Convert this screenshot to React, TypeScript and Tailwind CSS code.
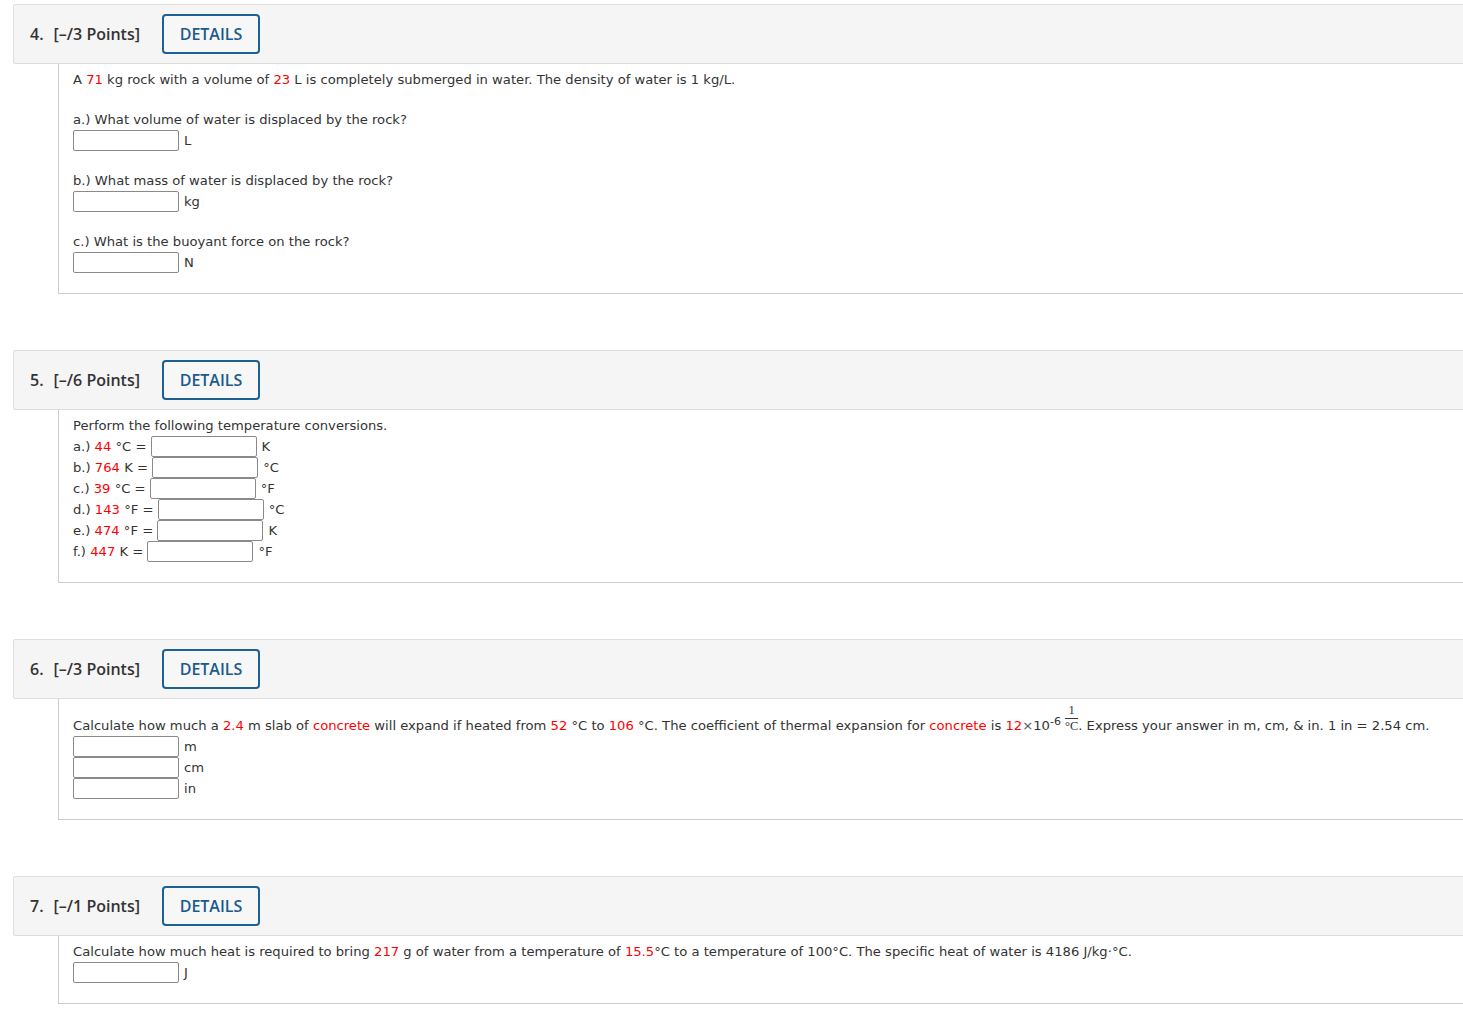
import type { ReactNode } from "react";

const body = "font-['DejaVu_Sans','Verdana',sans-serif] text-[13.15px] leading-[20px] text-[#333]";

function R({ children }: { children: ReactNode }) {
  return <span className="text-[#ff0000]">{children}</span>;
}

function Box() {
  return <span className="inline-block align-middle w-[106px] h-[21px] border border-[#8a8a8a] rounded-[2px] bg-white" />;
}

function InputRow({ unit }: { unit: string }) {
  return (
    <div className="flex items-center h-[21px]">
      <Box />
      <span className="ml-[5px]">{unit}</span>
    </div>
  );
}

function Question({ num, points, children }: { num: number; points: number; children: ReactNode }) {
  return (
    <section className="mb-[56px]">
      <div className="flex items-center h-[60px] bg-[#f5f5f5] border border-[#dddddd] rounded-l-[2px] pl-[16px] font-['Open_Sans',sans-serif] text-[#333]">
        <span className="text-[16px] font-semibold">{num}.</span>
        <span className="ml-[10px] text-[16px] font-semibold">[–/{points} Points]</span>
        <span className="ml-[22px] flex items-center justify-center w-[98px] h-[40px] border-2 border-[#1b6196] rounded-[4px] text-[16px] font-semibold text-[#1b5a8c] bg-[#f7f7f7]">
          DETAILS
        </span>
      </div>
      <div className={`ml-[45px] border-l border-b border-[#cccccc] pl-[14px] pb-[20px] ${body}`}>{children}</div>
    </section>
  );
}

function Conv({ label, value, from, unit }: { label: string; value: string; from: string; unit: string }) {
  return (
    <div className="flex items-center h-[21px]">
      <span>
        {label} <R>{value}</R> {from} =&nbsp;
      </span>
      <Box />
      <span className="ml-[5px]">{unit}</span>
    </div>
  );
}

export default function App() {
  return (
    <div className="w-full min-h-[1012px] bg-white overflow-hidden">
      <div className="w-[1500px] pl-[13px] pt-[4px]">
        <Question num={4} points={3}>
          <div className="pt-[6px]">
            A <R>71</R> kg rock with a volume of <R>23</R> L is completely submerged in water. The density of water is 1 kg/L.
          </div>
          <div className="h-[20px]" />
          <div>a.) What volume of water is displaced by the rock?</div>
          <InputRow unit="L" />
          <div className="h-[20px]" />
          <div>b.) What mass of water is displaced by the rock?</div>
          <InputRow unit="kg" />
          <div className="h-[20px]" />
          <div>c.) What is the buoyant force on the rock?</div>
          <InputRow unit="N" />
        </Question>

        <Question num={5} points={6}>
          <div className="pt-[6px]">Perform the following temperature conversions.</div>
          <Conv label="a.)" value="44" from="°C" unit="K" />
          <Conv label="b.)" value="764" from="K" unit="°C" />
          <Conv label="c.)" value="39" from="°C" unit="°F" />
          <Conv label="d.)" value="143" from="°F" unit="°C" />
          <Conv label="e.)" value="474" from="°F" unit="K" />
          <Conv label="f.)" value="447" from="K" unit="°F" />
        </Question>

        <Question num={6} points={3}>
          <div className="pt-[5px]">
            Calculate how much a <R>2.4</R> m slab of <R>concrete</R> will expand if heated from <R>52</R> °C to <R>106</R> °C. The
            coefficient of thermal expansion for <R>concrete</R> is <R>12</R>
            <span className="text-[#555]">×</span>10
            <sup className="text-[11px]">-6</sup>
            <span className="inline-block align-baseline ml-[4px] text-center font-['Liberation_Serif',serif] text-[12.5px] leading-[13px]">
              <span className="block border-b border-[#333] pb-[1px]">1</span>
              <span className="block pt-[1px]">°C</span>
            </span>
            . Express your answer in m, cm, &amp; in. 1 in = 2.54 cm.
          </div>
          <InputRow unit="m" />
          <InputRow unit="cm" />
          <InputRow unit="in" />
        </Question>

        <Question num={7} points={1}>
          <div className="pt-[6px]">
            Calculate how much heat is required to bring <R>217</R> g of water from a temperature of <R>15.5</R>°C to a temperature of
            100°C. The specific heat of water is 4186 J/kg·°C.
          </div>
          <InputRow unit="J" />
        </Question>
      </div>
    </div>
  );
}
